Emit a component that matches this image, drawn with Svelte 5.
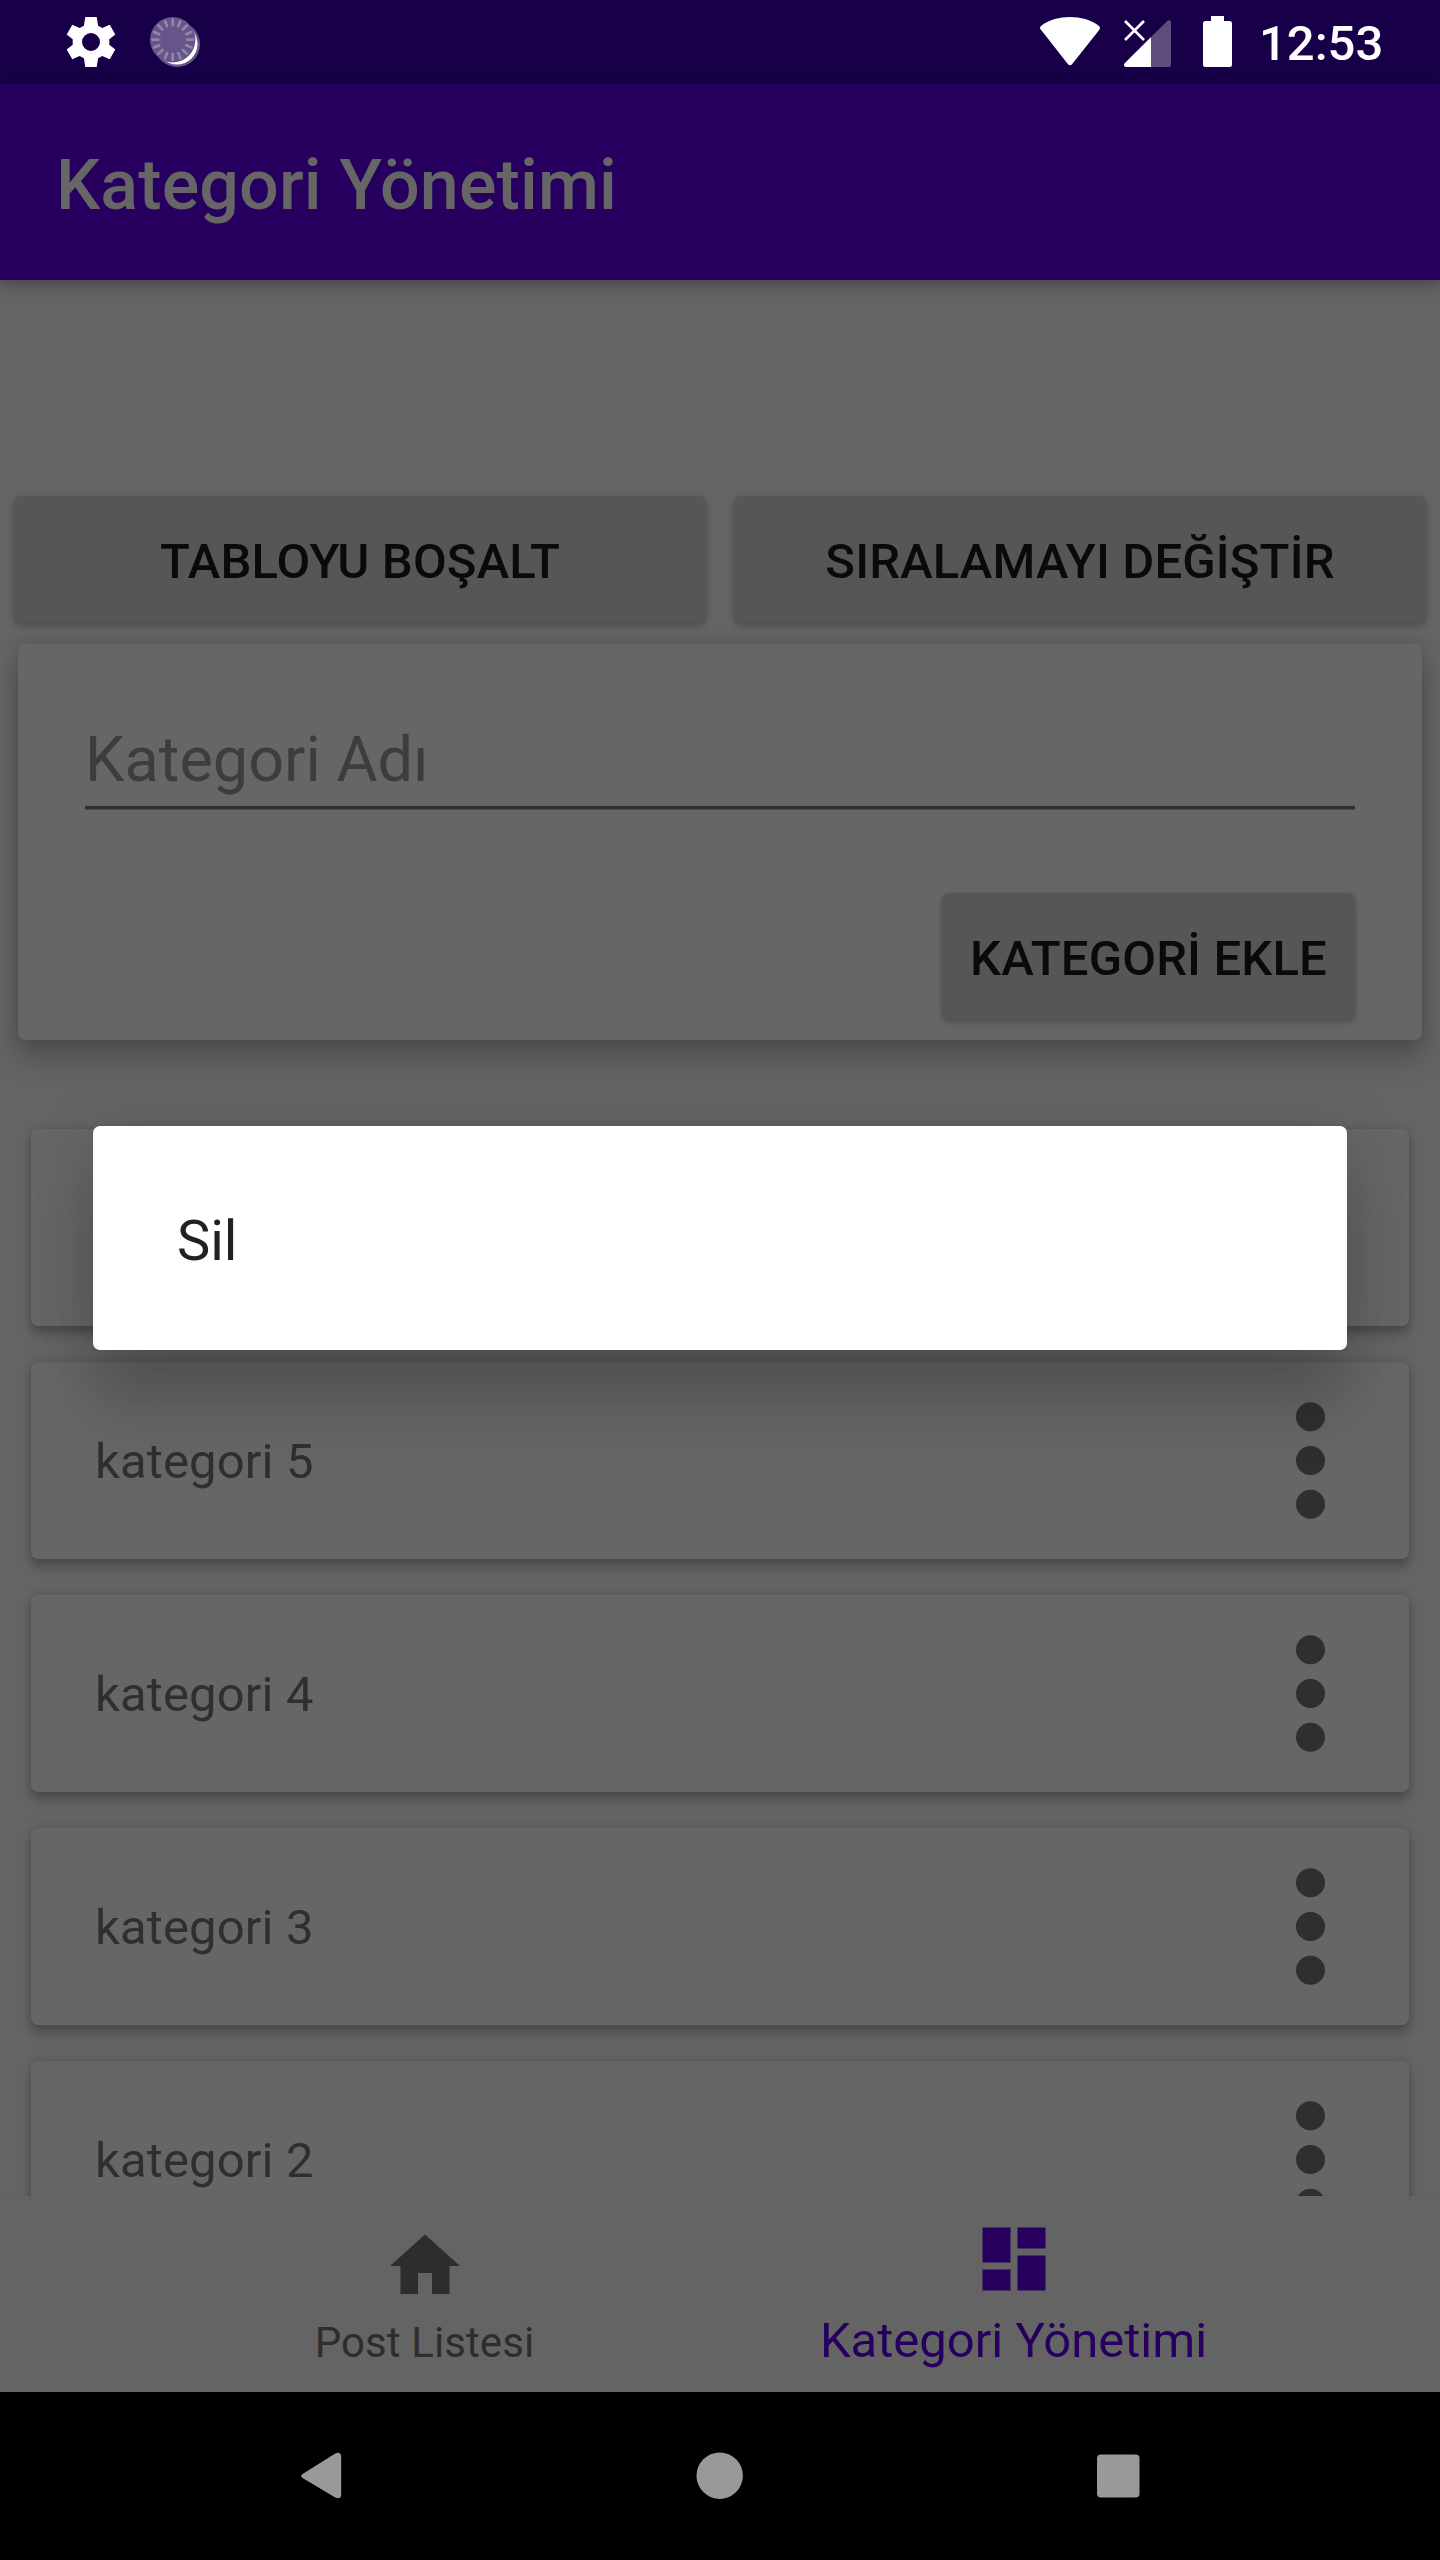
<script>
  const categories = ['', 'kategori 5', 'kategori 4', 'kategori 3', 'kategori 2'];
  const ticks = Array.from({ length: 16 }, (_, i) => i * 22.5);
</script>

<div class="screen">
  <header class="status">
    <div class="status-left">
      <svg class="gear" viewBox="0 0 50 50">
        <path fill-rule="evenodd" d="M19.3 0h11.4l1.4 8.7 4.2 2.4 7.4-3.4 5.6 9.7-6 4.8v5.6l6 4.8-5.6 9.7-7.4-3.4-4.2 2.4-1.4 8.7H19.3l-1.4-8.7-4.2-2.4-7.4 3.4-5.6-9.7 6-4.8v-5.6l-6-4.8 5.6-9.7 7.4 3.4 4.2-2.4zM25 16a9 9 0 1 0 0 18 9 9 0 0 0 0-18z" />
      </svg>
      <svg class="sync" viewBox="0 0 50 50">
        <circle cx="27.2" cy="27.2" r="22.8" fill="#665588" />
        <circle cx="27" cy="27" r="20.5" fill="#fff" />
        <circle cx="22.7" cy="22.7" r="22.7" fill="#665588" />
        {#each ticks as angle}
          <path d="M22.7 2.6v5.6" transform="rotate({angle} 22.7 22.7)" stroke="#9385aa" stroke-width="2.7" stroke-linecap="round" />
        {/each}
      </svg>
    </div>
    <div class="status-right">
      <svg class="wifi" viewBox="0 0 60 49">
        <path d="M1.4 13.2C-.3 11.9-.4 9.900 1.300 8.700 9.500 2.700 19.500 0 30 0s20.500 2.700 28.700 8.700c1.700 1.200 1.600 3.200.1 4.700L32 47.300c-1.100 1.400-2.900 1.400-4 0z" />
      </svg>
      <svg class="signal" viewBox="0 0 48 48">
        <path d="M27 17 43 1.200C44.600-.6 47 .2 47 2.500V45q0 2-2 2H27z" fill="#5d4d7d" />
        <path d="M27 17v30H2c-2 0-2.700-2.200-1.300-3.700z" />
        <path d="M1 1 20 20M20 1 1 20" stroke="#fff" stroke-width="2.600" />
      </svg>
      <svg class="battery" viewBox="0 0 29 51">
        <path d="M8 0h13v5h5.500Q29 5 29 7.500v41q0 2.500-2.500 2.500h-24Q0 51 0 48.500v-41Q0 5 2.500 5H8z" />
      </svg>
      <span class="time">12:53</span>
    </div>
  </header>

  <div class="appbar"><h1>Kategori Yönetimi</h1></div>

  <main>
    <div class="actions">
      <button>TABLOYU BOŞALT</button>
      <button>SIRALAMAYI DEĞİŞTİR</button>
    </div>

    <section class="form">
      <div class="field">Kategori Adı</div>
      <button class="add">KATEGORİ EKLE</button>
    </section>

    <ul>
      {#each categories as name}
        <li>
          <span>{name}</span>
          <svg class="dots" viewBox="0 0 29 117">
            <circle cx="14.5" cy="14.700" r="14.500" />
            <circle cx="14.5" cy="58.5" r="14.500" />
            <circle cx="14.5" cy="102.300" r="14.500" />
          </svg>
        </li>
      {/each}
    </ul>
  </main>

  <nav class="tabs">
    <div class="tab">
      <svg viewBox="0 0 24 24"><path d="M10 20v-6h4v6h5v-8h3L12 3 2 12h3v8z" /></svg>
      <span>Post Listesi</span>
    </div>
    <div class="tab active">
      <svg viewBox="0 0 24 24"><path d="M3 13h8V3H3zm0 8h8v-6H3zm10 0h8V11h-8zm0-18v6h8V3z" /></svg>
      <span>Kategori Yönetimi</span>
    </div>
  </nav>

  <footer class="keys">
    <svg viewBox="0 0 48 48"><path d="M4.600 21.900 37.200 1.500Q42.600-.8 43.200 4.500V43q-.6 5-6 2.500L4.600 26.100q-3-2.100 0-4.200z" /></svg>
    <svg viewBox="0 0 48 48"><circle cx="23.700" cy="23.700" r="23.200" /></svg>
    <svg viewBox="0 0 48 48"><rect x="3" y="2.500" width="42.500" height="43" rx="4" /></svg>
  </footer>

  <div class="dialog">Sil</div>
</div>

<style>
  :global(body) { margin: 0; background: #646464; }
  .screen {
    position: relative;
    display: flex;
    flex-direction: column;
    width: 1440px;
    height: 2560px;
    overflow: hidden;
    background: #646464;
    font-family: Roboto, sans-serif;
    font-size: 49px;
  }
  svg { display: block; flex: none; overflow: visible; }

  .status {
    display: flex;
    justify-content: space-between;
    flex: none;
    height: 84px;
    box-sizing: border-box;
    padding: 0 58px 0 66px;
    background: #170047;
    color: #fff;
    fill: #fff;
  }
  .status-left, .status-right { display: flex; align-items: flex-start; }
  .gear { width: 50px; height: 50px; margin-top: 17px; }
  .sync { width: 50px; height: 50px; margin: 17px 0 0 34px; }
  .wifi { width: 60px; height: 49px; margin-top: 17px; }
  .signal { width: 48px; height: 48px; margin: 20px 0 0 24px; }
  .battery { width: 29px; height: 51px; margin: 16px 0 0 31px; }
  .time { width: 123px; margin-left: 27px; line-height: 58px; padding-top: 15px; font-weight: 500; white-space: nowrap; }

  .appbar {
    position: relative;
    z-index: 1;
    display: flex;
    align-items: center;
    flex: none;
    height: 196px;
    padding-left: 56px;
    background: #27005f;
    box-shadow: 0 4px 14px rgba(0, 0, 0, .32);
  }
  h1 { margin: 6px 0 0; font-size: 70px; font-weight: 500; line-height: 82px; letter-spacing: .13px; color: #666; }

  main { flex: none; height: 1916px; overflow: hidden; }
  button {
    border: 0;
    padding: 5px 0 0;
    height: 126px;
    border-radius: 7px;
    background: #565656;
    box-shadow: 0 4px 6px rgba(0, 0, 0, .2), 0 0 4px rgba(0, 0, 0, .06);
    color: #0a0a0a;
    font: 500 49px/58px Roboto, sans-serif;
    letter-spacing: .15px;
  }
  .actions { display: grid; grid-template-columns: 1fr 1fr; gap: 28px; margin-top: 216px; padding: 0 14px; }
  .form {
    position: relative;
    display: flex;
    flex-direction: column;
    box-sizing: border-box;
    height: 396px;
    margin: 22px 18px 0;
    padding: 72px 67px 0;
    border-radius: 7px;
    background: #666;
    box-shadow: 0 18px 28px rgba(0, 0, 0, .22), 0 0 16px rgba(0, 0, 0, .12);
  }
  .field {
    box-sizing: border-box;
    height: 93px;
    border-bottom: 3px solid #2f2f2f;
    box-shadow: 0 1px #4a4a4a;
    color: #3d3d3d;
    font-size: 63px;
    line-height: 88px;
  }
  .add { align-self: flex-end; width: 413px; margin-top: 84px; }

  ul { display: flex; flex-direction: column; gap: 36px; margin: 89px 31px 0; padding: 0; list-style: none; }
  li {
    display: flex;
    align-items: center;
    justify-content: space-between;
    flex: none;
    box-sizing: border-box;
    height: 197px;
    padding: 0 84px 0 64px;
    border-radius: 7px;
    background: #666;
    box-shadow: 0 9px 10px rgba(0, 0, 0, .2), 0 0 8px rgba(0, 0, 0, .16);
    color: #2f2f2f;
  }
  li span { padding-top: 2px; letter-spacing: .15px; }
  .dots { width: 29px; height: 117px; fill: #2f2f2f; }

  .tabs {
    display: grid;
    grid-template-columns: 589px 589px;
    justify-content: center;
    flex: none;
    height: 196px;
    box-sizing: border-box;
    padding-right: 2px;
    background: #646464;
    color: #2d2d2d;
    fill: #2d2d2d;
    box-shadow: 0 0 4px rgba(0, 0, 0, .06);
    position: relative;
  }
  .tab { display: flex; flex-direction: column; align-items: center; padding-top: 28px; }
  .tab svg { width: 84px; height: 84px; }
  .tab span { margin-top: 10px; font-size: 42px; line-height: 50px; letter-spacing: .1px; }
  .tab.active { padding-top: 21px; color: #27005f; fill: #27005f; }
  .tab.active span { margin-top: 11px; font-size: 49px; line-height: 58px; letter-spacing: 0; }

  .keys {
    display: flex;
    justify-content: center;
    align-items: center;
    gap: 350px;
    flex: none;
    height: 168px;
    background: #000;
    fill: #999;
  }
  .keys svg { width: 48px; height: 48px; }

  .dialog {
    position: absolute;
    z-index: 2;
    left: 93px;
    top: 1126px;
    width: 1254px;
    height: 224px;
    box-sizing: border-box;
    padding: 3px 84px 0;
    border-radius: 7px;
    background: #fff;
    box-shadow: 0 56px 64px rgba(0, 0, 0, .18), 0 0 64px rgba(0, 0, 0, .1);
    color: #212121;
    font-size: 56px;
    line-height: 224px;
  }
</style>
